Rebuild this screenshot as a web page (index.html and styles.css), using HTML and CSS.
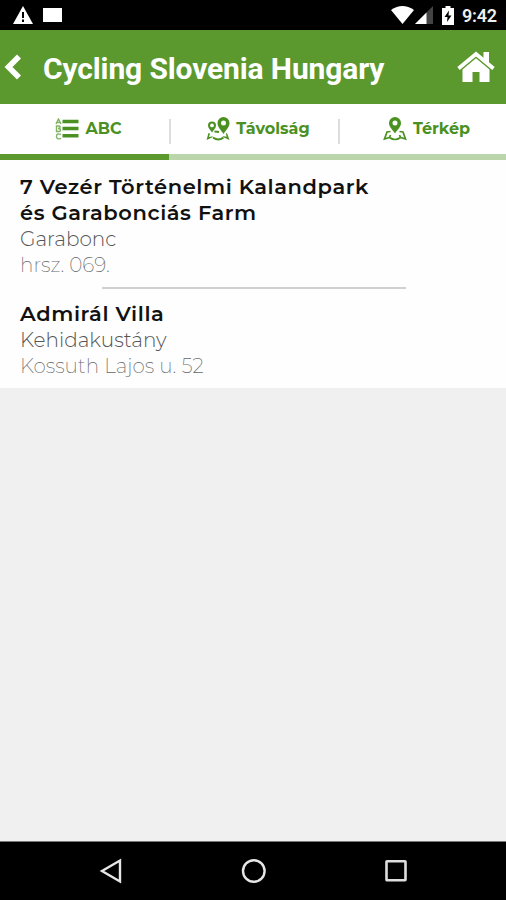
FILE: index.html
```html
<!DOCTYPE html>
<html lang="hu">
<head>
  <meta charset="UTF-8" />
  <meta name="viewport" content="width=device-width, initial-scale=1.0" />
  <title>Cycling Slovenia Hungary</title>
  <link rel="stylesheet" href="styles.css">
</head>
<body>
  <div class="status-bar">
    <svg class="icon-warning" width="20" height="18" viewBox="0 0 20 18">
      <path d="M10 0L20 18H0Z" fill="#fff"/>
      <path d="M10 6V12M10 13.5V16" stroke="#000" stroke-width="2"/>
    </svg>
    <span class="notification"></span>
    <svg class="icon-wifi" width="23" height="18" viewBox="0 0 23 18">
      <path d="M0 4Q11.500 -4 23 4L11.500 18Z" fill="#fff"/>
    </svg>
    <svg class="icon-signal" width="18" height="18" viewBox="0 0 18 18">
      <path d="M18 0V18H0Z" fill="#444"/>
      <path d="M11.500 6.500V18H0Z" fill="#fff"/>
    </svg>
    <svg class="icon-battery" width="12" height="19" viewBox="0 0 12 19">
      <path d="M3.500 0H8.500V2H12V19H0V2H3.500Z" fill="#fff"/>
      <path d="M7 4.500L2.500 11H5.500L5 16L9.500 9.500H6.500Z" fill="#000"/>
    </svg>
    <span class="clock">9:42</span>
  </div>

  <header class="header">
    <svg class="icon-back" width="18" height="26" viewBox="0 0 18 26">
      <path d="M15 2.500L4.500 13L15 23.500" fill="none" stroke="#fff" stroke-width="5.600"/>
    </svg>
    <h1>Cycling Slovenia Hungary</h1>
    <svg class="icon-home" width="38" height="32" viewBox="0 0 38 32">
      <path d="M1.500 17.500L19 3L36.500 17.500" fill="none" stroke="#fff" stroke-width="3.800"/>
      <path d="M26.500 1H32V13L26.500 8Z" fill="#fff"/>
      <path d="M19 7.200L32.500 18.500V31H22.500V21H15.500V31H5.500V18.500Z" fill="#fff"/>
    </svg>
  </header>

  <nav class="tabs">
    <div class="tab active">
      <svg width="24" height="22" viewBox="0 0 24 22">
        <g fill="none" stroke="#7fb360" stroke-width="1.400">
          <path d="M1 6L3.500 1L6 6M2 4.500H5"/>
          <path d="M1.500 8H4Q5.500 8 5 9.500Q4.800 10.500 3 10.500Q5.500 10.500 5.500 12Q5.500 13.500 4 13.500H1.500Z"/>
          <path d="M6 16.500Q1.500 14.500 1.500 18.500Q1.500 22 6 20.300"/>
        </g>
        <path d="M7.500 3.500H23.500M7.500 10.500H23.500M7.500 17.800H23.500" stroke="#4a9122" stroke-width="3.400"/>
      </svg>
      <span>ABC</span>
    </div>
    <div class="tab">
      <svg width="24" height="24" viewBox="0 0 24 24">
        <g fill="#4a9122">
          <path fill-rule="evenodd" d="M17.500 0A6 6 0 0 1 23.500 6C23.500 10 20 13 17.500 17C15 13 11.500 10 11.500 6A6 6 0 0 1 17.500 0ZM17.500 3.500A2.500 2.500 0 1 0 17.500 8.500A2.500 2.500 0 1 0 17.500 3.500Z"/>
          <path fill-rule="evenodd" d="M6 4.500A4 4 0 0 1 10 8.500C10 11 8 12.500 6 15.500C4 12.500 2 11 2 8.500A4 4 0 0 1 6 4.500ZM6 6.500A1.900 1.900 0 1 0 6 10.300A1.900 1.900 0 1 0 6 6.500Z"/>
          <path d="M2.500 16L0.500 23L6 20.500L7 19.300L3 20L4 16.500Z"/>
          <path d="M21 16L23.500 23L18 20.500L16.500 19L20.500 19.800L20 16.500Z"/>
        </g>
        <path d="M8.500 14.500L13 15M7 20.500Q12.500 24.500 17.500 20.500" fill="none" stroke="#4a9122" stroke-width="2"/>
      </svg>
      <span>Távolság</span>
    </div>
    <div class="tab">
      <svg width="24" height="24" viewBox="0 0 24 24">
        <path fill="#4a9122" fill-rule="evenodd" d="M12 0A6 6 0 0 1 18 6C18 10 14.500 12.500 12 16.500C9.500 12.500 6 10 6 6A6 6 0 0 1 12 0ZM12 3.400A2.500 2.500 0 1 0 12 8.400A2.500 2.500 0 1 0 12 3.400Z"/>
        <path d="M7.500 14.500L4 15L1.500 22L6.500 20.500Q12 24.500 17.500 20.500L22.500 22L20 15L16.500 14.500M6.500 20.500L7.500 18M17.500 20.500L16.500 18" fill="none" stroke="#4a9122" stroke-width="1.700"/>
      </svg>
      <span>Térkép</span>
    </div>
  </nav>

  <main class="list">
    <article class="place">
      <h2>7 Vezér Történelmi Kalandpark<br>és Garabonciás Farm</h2>
      <p class="city">Garabonc</p>
      <p class="address">hrsz. 069.</p>
    </article>
    <hr>
    <article class="place">
      <h2>Admirál Villa</h2>
      <p class="city">Kehidakustány</p>
      <p class="address">Kossuth Lajos u. 52</p>
    </article>
  </main>

  <footer class="nav-bar">
    <svg width="24" height="26" viewBox="0 0 24 26">
      <path d="M21 2.500V23.500L3 13Z" fill="none" stroke="#e6e6e6" stroke-width="2.400"/>
    </svg>
    <svg width="26" height="26" viewBox="0 0 26 26">
      <circle cx="12.800" cy="13" r="10.800" fill="none" stroke="#e6e6e6" stroke-width="2.400"/>
    </svg>
    <svg width="24" height="26" viewBox="0 0 24 26">
      <rect x="2.500" y="3.300" width="19" height="19" rx="0.500" fill="none" stroke="#dedede" stroke-width="2.600"/>
    </svg>
  </footer>
</body>
</html>
```

FILE: styles.css
```css
* {
  box-sizing: border-box;
}

body {
  margin: 0;
  height: 900px;
  display: flex;
  flex-direction: column;
  background-color: #f0f0f0;
  font-family: Montserrat, Inter, sans-serif;
  overflow: hidden;
}

svg {
  display: block;
  flex-shrink: 0;
}

h1, h2, p {
  margin: 0;
  white-space: nowrap;
}

.status-bar {
  height: 30px;
  padding: 0 9px 0 13px;
  display: flex;
  align-items: center;
  background: #000;
}

.notification {
  width: 19px;
  height: 14px;
  margin-left: 10px;
  background: #fff;
}

.icon-wifi {
  margin-left: auto;
}

.icon-signal {
  margin-left: 1px;
}

.icon-battery {
  margin-left: 9px;
}

.clock {
  width: 35px;
  margin: 1px 0 0 8px;
  color: #eee;
  font: 600 18px Roboto, sans-serif;
  letter-spacing: -0.2px;
}

.header {
  height: 74px;
  padding: 0 11px 0 4px;
  display: flex;
  align-items: center;
  background: #5b992f;
}

.header h1 {
  margin-left: 21px;
  padding-top: 2px;
  color: #fff;
  font: 700 30px Roboto, sans-serif;
  letter-spacing: -0.13px;
}

.icon-home {
  margin-left: auto;
}

.tabs {
  height: 56px;
  display: grid;
  grid-template-columns: 169px 169px 168px;
  background: #fff;
}

.tab {
  position: relative;
  padding: 0 0 1px 9px;
  display: flex;
  justify-content: center;
  align-items: center;
  gap: 6px;
  border-bottom: 6px solid #bbd6aa;
  color: #4a9122;
  font-size: 16px;
  font-weight: 700;
}

.tab.active {
  padding-left: 8px;
  border-bottom-color: #5b992f;
}

/* thin separators between the tabs */
.tab:not(:last-child)::after {
  content: "";
  position: absolute;
  top: 15px;
  right: -2px;
  width: 2px;
  height: 25px;
  background: #ddd;
}

.list {
  height: 228px;
  padding: 14px 20px 0;
  background: #fefefe;
}

.place h2 {
  color: #111;
  font-size: 21px;
  font-weight: 600;
  line-height: 26px;
  letter-spacing: 0.58px;
}

.city, .address {
  font-size: 20px;
  font-weight: 300;
}

.city {
  color: #555;
  line-height: 27px;
}

.address {
  color: #666;
  font-weight: 200;
  line-height: 25px;
}

.list hr {
  width: 304px;
  height: 2px;
  margin: 9px 0 12px 82px;
  border: 0;
  background: #d0d0d0;
}

.nav-bar {
  height: 59px;
  margin-top: auto;
  padding: 0 98px 0 99px;
  display: flex;
  justify-content: space-between;
  align-items: center;
  background: #000;
  border-top: 1px solid #777;
}
```
